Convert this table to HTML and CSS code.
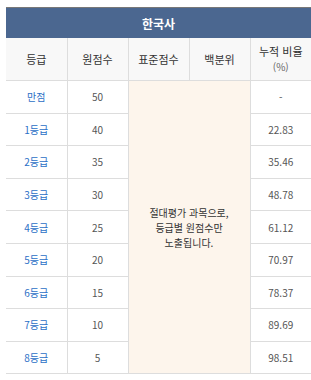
FILE: index.html
```html
<!DOCTYPE html>
<html lang="ko">
<head>
<meta charset="utf-8">
<link rel="stylesheet" href="styles.css">
</head>
<body>
<table class="score-table">
  <thead>
    <tr class="title-row"><th colspan="5">한국사</th></tr>
    <tr class="head-row">
      <th>등급</th>
      <th>원점수</th>
      <th>표준점수</th>
      <th>백분위</th>
      <th>누적 비율<br><span class="unit">(%)</span></th>
    </tr>
  </thead>
  <tbody>
    <tr><td class="grade">만점</td><td class="num">50</td><td class="note" colspan="2" rowspan="9">절대평가 과목으로,<br>등급별 원점수만<br>노출됩니다.</td><td class="num">-</td></tr>
    <tr><td class="grade">1등급</td><td class="num">40</td><td class="num">22.83</td></tr>
    <tr><td class="grade">2등급</td><td class="num">35</td><td class="num">35.46</td></tr>
    <tr><td class="grade">3등급</td><td class="num">30</td><td class="num">48.78</td></tr>
    <tr><td class="grade">4등급</td><td class="num">25</td><td class="num">61.12</td></tr>
    <tr><td class="grade">5등급</td><td class="num">20</td><td class="num">70.97</td></tr>
    <tr><td class="grade">6등급</td><td class="num">15</td><td class="num">78.37</td></tr>
    <tr><td class="grade">7등급</td><td class="num">10</td><td class="num">89.69</td></tr>
    <tr><td class="grade">8등급</td><td class="num">5</td><td class="num">98.51</td></tr>
  </tbody>
</table>
</body>
</html>
```
FILE: styles.css
```css
html, body {
  margin: 0;
  padding: 0;
  background: #ffffff;
}
body {
  padding: 7px 0 0 6px;
  font-family: "Noto Sans CJK KR", "Noto Sans", sans-serif;
}
.score-table {
  border-collapse: collapse;
  width: 305px;
  table-layout: fixed;
  text-align: center;
}
.title-row th {
  background: #4b6790;
  color: #ffffff;
  font-size: 12px;
  font-weight: bold;
  height: 30px;
  padding: 0;
  border-top: 1px solid #787878;
}
.head-row th {
  background: #f8f8f8;
  color: #333333;
  font-size: 11px;
  font-weight: normal;
  height: 42px;
  padding: 0;
  line-height: 15px;
  border: 1px solid #dddddd;
  border-top: none;
}
.head-row th:first-child { border-left: none; width: 59px; }
.head-row th:nth-child(2) { width: 59px; }
.head-row th:nth-child(3) { width: 59px; }
.head-row th:nth-child(4) { width: 58px; }
.head-row th:last-child { border-right: none; }
.unit {
  font-size: 10px;
  color: #666666;
}
tbody td {
  height: 31.6px;
  padding: 0;
  font-size: 10px;
  border: 1px solid #dddddd;
}
tbody td:first-child { border-left: none; }
tbody td:last-child { border-right: none; }
.grade { color: #2b6fc6; }
.num { color: #555555; }
.note {
  background: #fdf5ec;
  color: #333333;
  line-height: 15px;
}
```
